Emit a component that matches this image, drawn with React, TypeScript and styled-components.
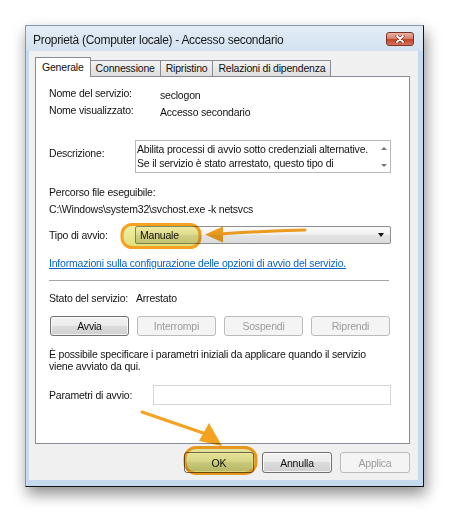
import styled, { createGlobalStyle } from 'styled-components'

const GlobalStyle = createGlobalStyle`
  html, body {
    margin: 0;
    padding: 0;
    background: #fff;
  }
  body {
    font-family: 'Liberation Sans', Arial, sans-serif;
    font-size: 10.5px;
    letter-spacing: -0.2px;
    color: #111;
  }
`

const ORANGE = '#f4a21f'

// Page / window frame
const Page = styled.div`
  position: relative;
  width: 450px;
  height: 512px;
  padding: 25px 0 0 25px;
  box-sizing: border-box;
  overflow: hidden;
`

const Window = styled.div`
  width: 399px;
  height: 462px;
  box-sizing: border-box;
  border: 1px solid #8598ae;
  border-right-color: #151515;
  border-bottom-color: #151515;
  background: #c5d9ef;
  box-shadow: 2px 7px 14px rgba(0, 0, 0, 0.45);
  display: flex;
  flex-direction: column;
  padding: 0 5px 6px 3px;
`

const TitleBar = styled.div`
  height: 25px;
  margin: 0 -5px 0 -3px;
  padding: 0 9px 0 7px;
  display: flex;
  align-items: center;
  justify-content: space-between;
  background: linear-gradient(#e4edf7, #d3e1f0);
  flex-shrink: 0;
`

const Title = styled.div`
  font-size: 12px;
  letter-spacing: -0.3px;
  color: #1a1a1a;
  padding-top: 3px;
`

const CloseButton = styled.div`
  width: 28px;
  height: 14px;
  box-sizing: border-box;
  border: 1px solid #7b3326;
  border-radius: 3px;
  background: linear-gradient(#e9b3a3 0%, #d9826d 45%, #c0432a 55%, #d7735d 100%);
  display: flex;
  align-items: center;
  justify-content: center;
  margin-top: 1px;
`

const Body = styled.div`
  flex: 1;
  background: #f0f0f0;
  padding: 6px 8px 7px 6px;
  display: flex;
  flex-direction: column;
`

// Tabs
const TabStrip = styled.div`
  display: flex;
  align-items: flex-end;
  height: 20px;
  margin-bottom: -1px;
  position: relative;
  z-index: 1;
`

const Tab = styled.div<{ $active?: boolean }>`
  box-sizing: border-box;
  height: ${p => (p.$active ? 20 : 16)}px;
  margin-bottom: ${p => (p.$active ? 0 : 1)}px;
  margin-left: ${p => (p.$active ? 0 : -1)}px;
  padding: ${p => (p.$active ? '2px 6px 0 6px' : '0 5px')};
  border: 1px solid #898c95;
  border-bottom: none;
  background: ${p =>
    p.$active ? '#fff' : 'linear-gradient(#f3f3f3, #e9e9e9 50%, #dedede)'};
  line-height: 15px;
  position: relative;
  z-index: ${p => (p.$active ? 2 : 1)};
  white-space: nowrap;
  &:first-child {
    margin-left: 0;
  }
`

const Panel = styled.div`
  height: 368px;
  box-sizing: border-box;
  background: #fff;
  border: 1px solid #898c95;
  padding: 8px 17px 0 13px;
  display: flex;
  flex-direction: column;
`

// Panel content
const Row = styled.div<{ $top?: number; $align?: string; $h?: number }>`
  display: flex;
  align-items: ${p => p.$align ?? 'center'};
  margin-top: ${p => p.$top ?? 0}px;
  height: ${p => (p.$h ? `${p.$h}px` : 'auto')};
  line-height: 13px;
`

const Label = styled.div<{ $w?: number; $pt?: number }>`
  width: ${p => (p.$w ? `${p.$w}px` : 'auto')};
  padding-top: ${p => p.$pt ?? 0}px;
  flex-shrink: 0;
  white-space: nowrap;
`

const Value = styled.div`
  padding-top: 3px;
  white-space: nowrap;
`

const Line = styled.div<{ $top?: number }>`
  margin-top: ${p => p.$top ?? 0}px;
  line-height: 13px;
  white-space: nowrap;
`

const TextBox = styled.div`
  width: 256px;
  height: 33px;
  box-sizing: border-box;
  border: 1px solid #b5b8be;
  display: flex;
`

const TextBoxText = styled.div`
  flex: 1;
  padding: 1px 0 0 1px;
  line-height: 14px;
  white-space: nowrap;
  overflow: hidden;
`

const ScrollBar = styled.div`
  width: 12px;
  display: flex;
  flex-direction: column;
  justify-content: space-between;
  align-items: center;
  padding: 6px 0 5px;
`

const ScrollArrow = styled.div<{ $down?: boolean }>`
  width: 0;
  height: 0;
  border-left: 3px solid transparent;
  border-right: 3px solid transparent;
  ${p =>
    p.$down ? 'border-top: 3px solid #777;' : 'border-bottom: 3px solid #777;'}
`

const Select = styled.div`
  width: 256px;
  height: 18px;
  box-sizing: border-box;
  border: 1px solid #8e8f8f;
  border-radius: 2px;
  background: linear-gradient(#fbfbfb, #f0f0f0 50%, #e3e3e3 51%, #dcdcdc);
  display: flex;
  align-items: center;
  justify-content: space-between;
  padding: 0 6px 0 4px;
`

const SelectCaret = styled.div`
  width: 0;
  height: 0;
  border-left: 3.5px solid transparent;
  border-right: 3.5px solid transparent;
  border-top: 4px solid #111;
`

const Link = styled.a`
  color: #0a64c8;
  text-decoration: underline;
  white-space: nowrap;
`

const Separator = styled.div`
  height: 1px;
  background: #a5a5a5;
  margin: 10px 3px 0 0;
`

const ButtonRow = styled.div<{ $top?: number; $gap: number; $end?: boolean; $indent?: number }>`
  display: flex;
  gap: ${p => p.$gap}px;
  margin-top: ${p => p.$top ?? 0}px;
  padding-left: ${p => p.$indent ?? 0}px;
  justify-content: ${p => (p.$end ? 'flex-end' : 'flex-start')};
`

const Button = styled.div<{ $w: number; $h: number; $disabled?: boolean }>`
  width: ${p => p.$w}px;
  height: ${p => p.$h}px;
  box-sizing: border-box;
  border: 1px solid ${p => (p.$disabled ? '#b8bcbf' : '#707070')};
  border-radius: 3px;
  background: ${p =>
    p.$disabled
      ? '#f4f4f4'
      : 'linear-gradient(#f3f3f3 0%, #ebebeb 49%, #dddddd 50%, #cfcfcf 100%)'};
  box-shadow: ${p => (p.$disabled ? 'none' : 'inset 0 0 0 1px rgba(255,255,255,0.75)')};
  color: ${p => (p.$disabled ? '#9c9c9c' : '#111')};
  display: flex;
  align-items: center;
  justify-content: center;
`

const Paragraph = styled.div`
  margin-top: 12px;
  line-height: 12px;
`

const Input = styled.div`
  width: 238px;
  height: 20px;
  box-sizing: border-box;
  border: 1px solid #d3d5d8;
`

// Annotations drawn over the dialog
const Overlay = styled.svg`
  position: absolute;
  left: 0;
  top: 0;
  pointer-events: none;
  mix-blend-mode: multiply;
`

export default function App() {
  return (
    <Page>
      <GlobalStyle />
      <Window>
        <TitleBar>
          <Title>Proprietà (Computer locale) - Accesso secondario</Title>
          <CloseButton>
            <svg width="10" height="8" viewBox="0 0 10 8">
              <path d="M2 1 L8 7 M8 1 L2 7" stroke="#5a1a10" strokeWidth="3" strokeLinecap="round" />
              <path d="M2 1 L8 7 M8 1 L2 7" stroke="#fff" strokeWidth="1.8" strokeLinecap="round" />
            </svg>
          </CloseButton>
        </TitleBar>
        <Body>
          <TabStrip>
            <Tab $active>Generale</Tab>
            <Tab>Connessione</Tab>
            <Tab>Ripristino</Tab>
            <Tab>Relazioni di dipendenza</Tab>
          </TabStrip>
          <Panel>
            <Row $h={17}>
              <Label $w={111}>Nome del servizio:</Label>
              <Value>seclogon</Value>
            </Row>
            <Row $h={17}>
              <Label $w={111}>Nome visualizzato:</Label>
              <Value>Accesso secondario</Value>
            </Row>
            <Row $top={21} $align="flex-start">
              <Label $w={86} $pt={7}>Descrizione:</Label>
              <TextBox>
                <TextBoxText>
                  Abilita processi di avvio sotto credenziali alternative.
                  <br />
                  Se il servizio è stato arrestato, questo tipo di
                </TextBoxText>
                <ScrollBar>
                  <ScrollArrow />
                  <ScrollArrow $down />
                </ScrollBar>
              </TextBox>
            </Row>
            <Line $top={13}>Percorso file eseguibile:</Line>
            <Line $top={4}>C:\Windows\system32\svchost.exe -k netsvcs</Line>
            <Row $top={10}>
              <Label $w={86}>Tipo di avvio:</Label>
              <Select>
                <span>Manuale</span>
                <SelectCaret />
              </Select>
            </Row>
            <Line $top={13}>
              <Link>Informazioni sulla configurazione delle opzioni di avvio del servizio.</Link>
            </Line>
            <Separator />
            <Row $top={11}>
              <Label $w={87}>Stato del servizio:</Label>
              <span>Arrestato</span>
            </Row>
            <ButtonRow $top={11} $gap={8} $indent={1}>
              <Button $w={79} $h={20}>Avvia</Button>
              <Button $w={79} $h={20} $disabled>Interrompi</Button>
              <Button $w={79} $h={20} $disabled>Sospendi</Button>
              <Button $w={79} $h={20} $disabled>Riprendi</Button>
            </ButtonRow>
            <Paragraph>
              È possibile specificare i parametri iniziali da applicare quando il servizio
              <br />
              viene avviato da qui.
            </Paragraph>
            <Row $top={13}>
              <Label $w={104}>Parametri di avvio:</Label>
              <Input />
            </Row>
          </Panel>
          <ButtonRow $top={8} $gap={8} $end>
            <Button $w={70} $h={21}>OK</Button>
            <Button $w={70} $h={21}>Annulla</Button>
            <Button $w={70} $h={21} $disabled>Applica</Button>
          </ButtonRow>
        </Body>
      </Window>

      <Overlay width="450" height="512" viewBox="0 0 450 512">
        <defs>
          <linearGradient id="hl" x1="0" y1="0" x2="0" y2="1">
            <stop offset="0" stopColor="#f4f0a8" />
            <stop offset="1" stopColor="#dfe07a" />
          </linearGradient>
        </defs>
        <rect x="122" y="224.5" width="78" height="23" rx="10" fill="url(#hl)" stroke={ORANGE} strokeWidth="3" />
        <path d="M305 230 Q262 231 219 234" fill="none" stroke={ORANGE} strokeWidth="3" strokeLinecap="round" />
        <polygon points="205,234.5 223,226.5 223,242.5" fill={ORANGE} />
        <rect x="185" y="447.5" width="71" height="26" rx="11" fill="url(#hl)" stroke={ORANGE} strokeWidth="3" />
        <path d="M142 412 L206 434" fill="none" stroke={ORANGE} strokeWidth="3" strokeLinecap="round" />
        <polygon points="222,446 199,441 209,423" fill={ORANGE} />
      </Overlay>
    </Page>
  )
}
